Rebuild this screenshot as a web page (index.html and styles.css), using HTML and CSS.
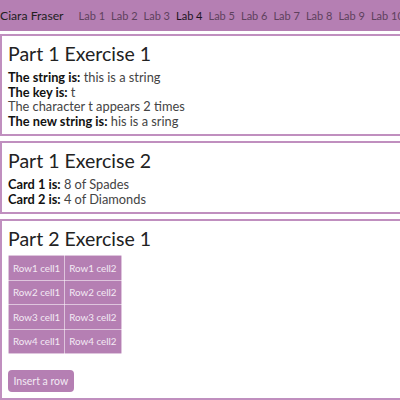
FILE: index.html
```html
<!DOCTYPE html>
<html>
<head>
<meta charset="utf-8">
<link rel="stylesheet" href="styles.css">
</head>
<body>
<div class="page">
  <nav class="navbar">
    <span class="brand">Ciara Fraser</span>
    <a class="nav-link">Lab 1</a>
    <a class="nav-link">Lab 2</a>
    <a class="nav-link">Lab 3</a>
    <a class="nav-link active">Lab 4</a>
    <a class="nav-link">Lab 5</a>
    <a class="nav-link">Lab 6</a>
    <a class="nav-link">Lab 7</a>
    <a class="nav-link">Lab 8</a>
    <a class="nav-link">Lab 9</a>
    <a class="nav-link">Lab 10</a>
  </nav>
  <section class="card">
    <h2 class="card-title">Part 1 Exercise 1</h2>
    <div class="line"><b>The string is:</b> this is a string</div>
    <div class="line"><b>The key is:</b> t</div>
    <div class="line">The character t appears 2 times</div>
    <div class="line"><b>The new string is:</b> his is a sring</div>
  </section>
  <section class="card">
    <h2 class="card-title">Part 1 Exercise 2</h2>
    <div class="line"><b>Card 1 is:</b> 8 of Spades</div>
    <div class="line"><b>Card 2 is:</b> 4 of Diamonds</div>
  </section>
  <section class="card card-last">
    <h2 class="card-title">Part 2 Exercise 1</h2>
    <table class="grid">
      <tr><td>Row1 cell1</td><td>Row1 cell2</td></tr>
      <tr><td>Row2 cell1</td><td>Row2 cell2</td></tr>
      <tr><td>Row3 cell1</td><td>Row3 cell2</td></tr>
      <tr><td>Row4 cell1</td><td>Row4 cell2</td></tr>
    </table>
    <button class="btn">Insert a row</button>
  </section>
</div>
</body>
</html>
```
FILE: styles.css
```css
html, body {
  margin: 0;
  padding: 0;
  overflow: hidden;
  background: #fff;
}
.page {
  width: 640px;
  font-family: "Lato", "Noto Sans", sans-serif;
  color: #212529;
}
.navbar {
  display: flex;
  align-items: center;
  height: 31px;
  background: #b57fb3;
  white-space: nowrap;
}
.brand {
  font-size: 12.2px;
  color: #212121;
  margin-right: 12px;
}
.nav-link {
  display: block;
  font-size: 11px;
  color: #5e415d;
  padding: 0 3px;
}
.nav-link.active {
  color: #1e141e;
}
.card {
  margin-top: 3px;
  border: 2px solid #c08fbf;
  padding: 5px 6px 6px;
  font-size: 12.8px;
  line-height: 14.5px;
  color: #444;
}
.card + .card {
  margin-top: 5px;
}
.card b {
  color: #111;
}
.card-title {
  margin: 0 0 3px;
  font-size: 19.5px;
  font-weight: 400;
  line-height: 26px;
  color: #222;
}
.grid {
  border-collapse: collapse;
  background: #b57fb3;
}
.grid td {
  border: 1px solid rgba(255,255,255,0.55);
  color: #f3eaf3;
  font-size: 9.8px;
  height: 23.5px;
  padding: 0 4px;
  white-space: nowrap;
}
.btn {
  display: block;
  margin-top: 16px;
  background: #b57fb3;
  color: #f3eaf3;
  border: none;
  border-radius: 4px;
  font-family: inherit;
  font-size: 10.5px;
  height: 22px;
  padding: 0 5.5px;
}
```
